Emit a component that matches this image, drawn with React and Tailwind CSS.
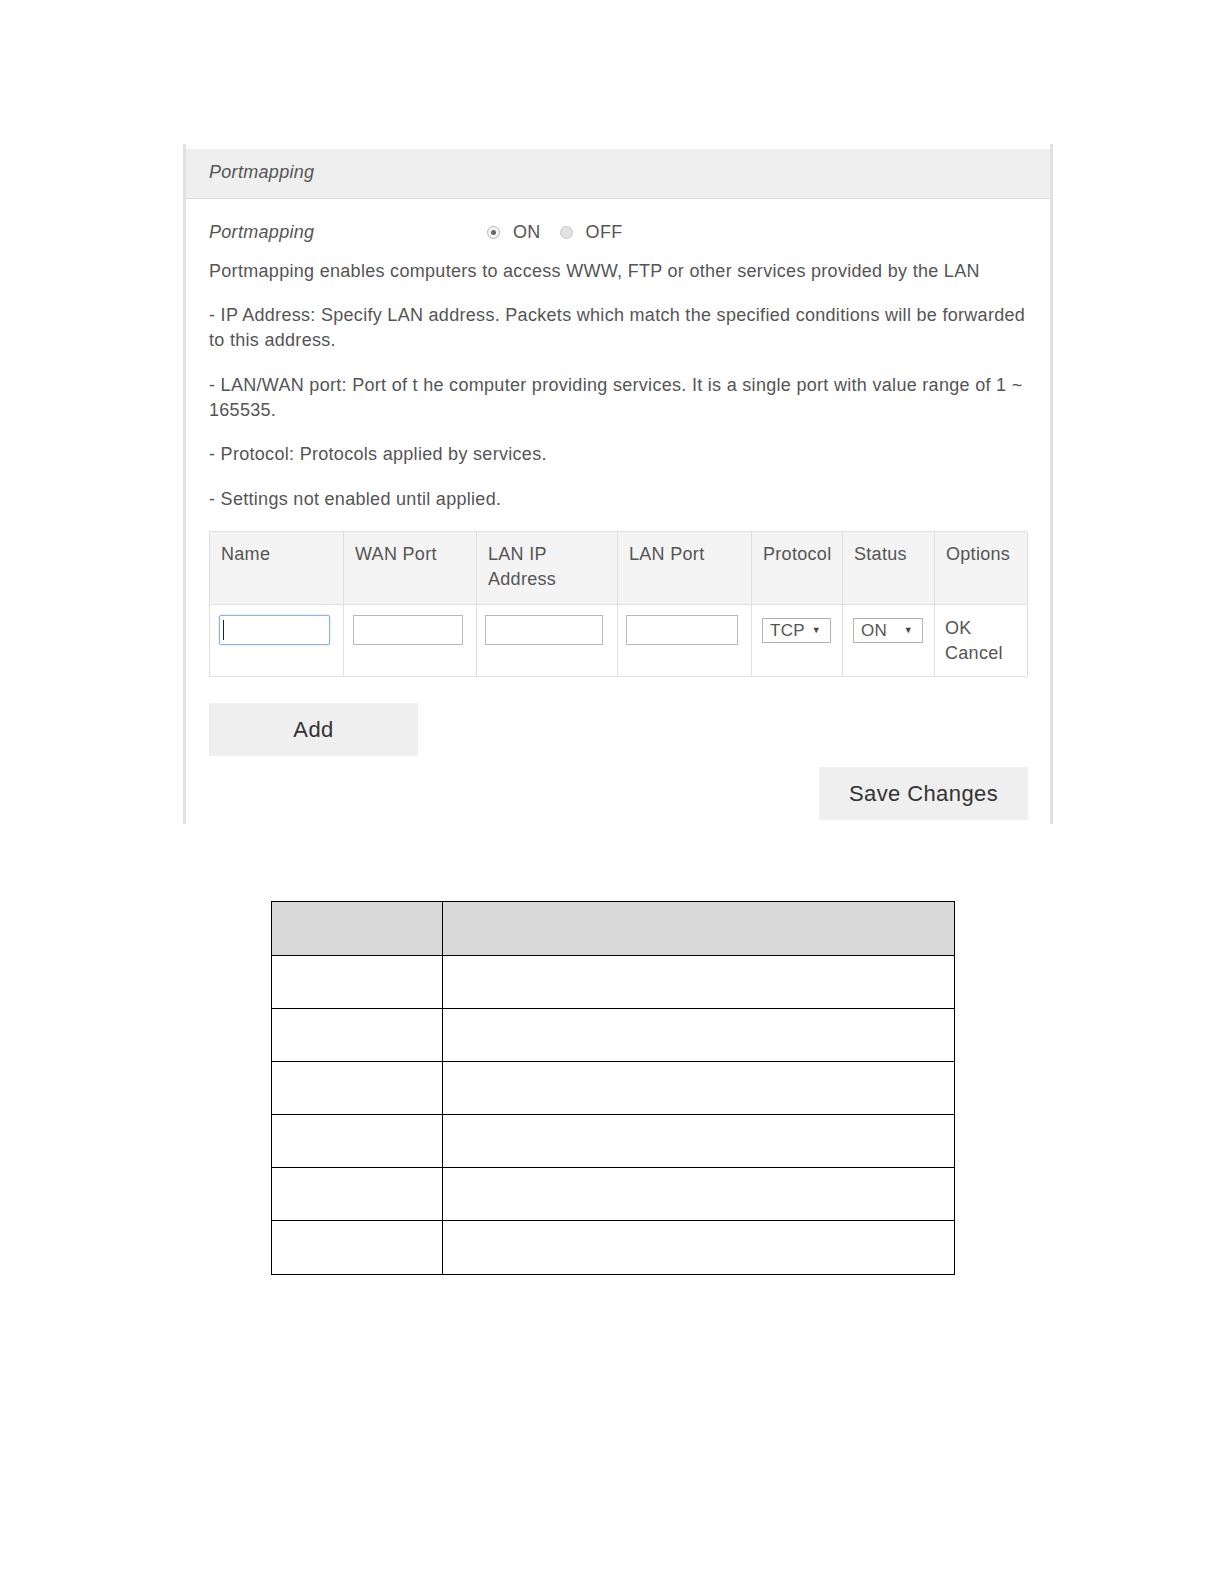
import React from 'react';

const columns = [
  { label: 'Name', w: 'w-[134px]' },
  { label: 'WAN Port', w: 'w-[133px]' },
  { label: 'LAN IP Address', w: 'w-[141px]', wrap: true },
  { label: 'LAN Port', w: 'w-[134px]' },
  { label: 'Protocol', w: 'w-[91px]' },
  { label: 'Status', w: 'w-[92px]' },
  { label: 'Options', w: 'w-[93px]' },
];

function Radio({ checked, label }) {
  return (
    <label className="flex items-center">
      <span
        className={`w-[13px] h-[13px] rounded-full border flex items-center justify-center ${
          checked ? 'border-[#b5b5b5] bg-[#f4f4f4]' : 'border-[#c6c6c6] bg-[#e2e2e2]'
        }`}
      >
        {checked && <span className="w-[5px] h-[5px] rounded-full bg-[#666]" />}
      </span>
      <span className="ml-[13px]">{label}</span>
    </label>
  );
}

function TextBox({ focused, width }) {
  if (focused) {
    return (
      <div className={`${width} h-[30px] border border-[#8fb2dc] rounded-[2px] shadow-[0_0_2px_#a9c5e6] bg-white flex items-center pl-[3px]`}>
        <span className="w-[1px] h-[20px] bg-[#222]" />
      </div>
    );
  }
  return <div className={`${width} h-[30px] border border-[#b9b9b9] bg-white`} />;
}

function Select({ value, width }) {
  return (
    <div className={`${width} h-[25px] border border-[#b3b3b3] bg-white flex items-center justify-between pl-[7px] pr-[9px] text-[17px] leading-none text-[#555]`}>
      <span>{value}</span>
      <span className="text-[9px] text-[#444]">▼</span>
    </div>
  );
}

export default function App() {
  const cell = 'border-r border-[#e0e0e0] shrink-0';

  return (
    <div className="w-[1224px] h-[1584px] bg-white font-['Liberation_Sans',Arial,sans-serif] text-[#555]">
      {/* Portmapping panel */}
      <div className="pt-[144px]">
        <div className="ml-[183px] w-[870px] border-x-[3px] border-[#e1e1e1] pt-[5px] pb-[4px]">
          <div className="h-[50px] bg-[#efefef] border-b border-[#dcdcdc] pl-[23px] pt-[11px] text-[18px] leading-[25px] tracking-[0.3px] italic text-[#555]">
            Portmapping
          </div>

          <div className="pl-[23px] pr-[22px] text-[18px] leading-[25px] tracking-[0.3px]">
            <div className="mt-[21px] flex items-center">
              <span className="w-[278px] italic">Portmapping</span>
              <div className="flex items-center gap-[19px]">
                <Radio checked label="ON" />
                <Radio label="OFF" />
              </div>
            </div>

            <p className="mt-[14px]">Portmapping enables computers to access WWW, FTP or other services provided by the LAN</p>
            <p className="mt-[19px]">
              - IP Address: Specify LAN address. Packets which match the specified conditions will be forwarded
              <br />
              to this address.
            </p>
            <p className="mt-[20px]">
              - LAN/WAN port: Port of t he computer providing services. It is a single port with value range of 1 ~
              <br />
              165535.
            </p>
            <p className="mt-[19px]">- Protocol: Protocols applied by services.</p>
            <p className="mt-[20px]">- Settings not enabled until applied.</p>

            {/* rule table */}
            <div className="mt-[19px] w-[818px] border-t border-l border-[#e0e0e0]">
              <div className="flex h-[73px] bg-[#f4f4f4] border-b border-[#e0e0e0]">
                {columns.map(col => (
                  <div key={col.label} className={`${cell} ${col.w} pl-[11px] pr-[6px] pt-[10px]`}>
                    {col.wrap ? (
                      <>
                        LAN IP
                        <br />
                        Address
                      </>
                    ) : (
                      col.label
                    )}
                  </div>
                ))}
              </div>
              <div className="flex h-[72px] bg-white border-b border-[#e0e0e0]">
                <div className={`${cell} w-[134px] pl-[9px] pt-[10px]`}>
                  <TextBox focused width="w-[111px]" />
                </div>
                <div className={`${cell} w-[133px] pl-[9px] pt-[10px]`}>
                  <TextBox width="w-[110px]" />
                </div>
                <div className={`${cell} w-[141px] pl-[8px] pt-[10px]`}>
                  <TextBox width="w-[118px]" />
                </div>
                <div className={`${cell} w-[134px] pl-[8px] pt-[10px]`}>
                  <TextBox width="w-[112px]" />
                </div>
                <div className={`${cell} w-[91px] pl-[10px] pt-[13px]`}>
                  <Select value="TCP" width="w-[69px]" />
                </div>
                <div className={`${cell} w-[92px] pl-[10px] pt-[13px]`}>
                  <Select value="ON" width="w-[70px]" />
                </div>
                <div className={`${cell} w-[93px] pl-[10px] pt-[11px] leading-[24.5px]`}>
                  <div>OK</div>
                  <div>Cancel</div>
                </div>
              </div>
            </div>

            <button className="mt-[26px] w-[209px] h-[53px] bg-[#efefef] text-[22px] tracking-[0.4px] text-[#333] flex items-center justify-center">
              Add
            </button>
            <div className="mt-[11px] flex justify-end">
              <button className="w-[209px] h-[53px] bg-[#efefef] text-[22px] tracking-[0.4px] text-[#333] flex items-center justify-center">
                Save Changes
              </button>
            </div>
          </div>
        </div>
      </div>

      {/* blank reference table */}
      <div className="mt-[77px] ml-[271px] w-[684px] border border-black">
        <div className="flex h-[54px] bg-[#d9d9d9] border-b border-black">
          <div className="w-[171px] border-r border-black" />
          <div className="flex-1" />
        </div>
        {[0, 1, 2, 3, 4, 5].map(i => (
          <div key={i} className={`flex h-[53px] ${i < 5 ? 'border-b border-black' : ''}`}>
            <div className="w-[171px] border-r border-black" />
            <div className="flex-1" />
          </div>
        ))}
      </div>
    </div>
  );
}
